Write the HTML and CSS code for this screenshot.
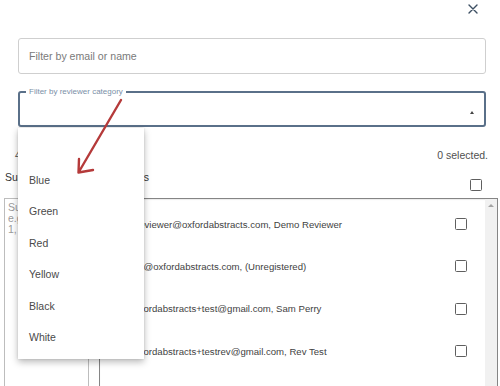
FILE: index.html
```html
<!DOCTYPE html>
<html lang="en">
<head>
<meta charset="UTF-8">
<meta name="viewport" content="width=device-width, initial-scale=1.0">
<title>Assign Reviewers</title>
<link rel="stylesheet" href="styles.css">
</head>
<body>
<div class="dialog">
    <div class="topbar">
        <button class="close" aria-label="Close">
            <svg width="10" height="10" viewBox="0 0 10 10"><path d="M1 1 L9 9 M9 1 L1 9" stroke="#3d4f63" stroke-width="1.4" stroke-linecap="round"/></svg>
        </button>
    </div>
    <input class="search" type="text" placeholder="Filter by email or name">
    <div class="select">
        <span class="select-label">Filter by reviewer category</span>
        <span class="caret"></span>
        <ul class="menu">
            <li class="menu-item"></li>
            <li class="menu-item">Blue</li>
            <li class="menu-item">Green</li>
            <li class="menu-item">Red</li>
            <li class="menu-item">Yellow</li>
            <li class="menu-item">Black</li>
            <li class="menu-item">White</li>
        </ul>
    </div>
    <div class="meta">
        <span class="count">4 submissions</span>
        <span class="selected">0 selected.</span>
    </div>
    <div class="columns-head">
        <span class="col-left">Submissions</span>
        <span class="col-right">Reviewers</span>
        <span class="checkbox"></span>
    </div>
    <div class="lists">
        <div class="ids">Submission IDs<br>e.g.<br>1, 2, 3</div>
        <div class="reviewers">
            <ul class="rows">
                <li class="row"><span class="row-text">demoreviewer@oxfordabstracts.com, Demo Reviewer</span><span class="checkbox"></span></li>
                <li class="row"><span class="row-text">admin1@oxfordabstracts.com, (Unregistered)</span><span class="checkbox"></span></li>
                <li class="row"><span class="row-text">tom.oxfordabstracts+test@gmail.com, Sam Perry</span><span class="checkbox"></span></li>
                <li class="row"><span class="row-text">tom.oxfordabstracts+testrev@gmail.com, Rev Test</span><span class="checkbox"></span></li>
            </ul>
            <div class="scrollbar"><span class="scroll-up"></span></div>
        </div>
    </div>
    <!-- annotation arrow drawn over the screenshot -->
    <svg class="annotation" width="500" height="386" viewBox="0 0 500 386">
        <path d="M121 100 L78.5 172.5 M79 159 L78.5 172.5 L93 170" fill="none" stroke="#b53a3a" stroke-width="2.4" stroke-linecap="round" stroke-linejoin="round"/>
    </svg>
</div>
</body>
</html>
```

FILE: styles.css
```css
html, body {
    margin: 0;
    padding: 0;
    width: 100%;
    height: 100%;
    background: #fff;
    font-family: "Liberation Sans", Arial, sans-serif;
    color: #444;
    overflow: hidden;
}
.dialog {
    position: relative;
    height: 386px;
}
.topbar {
    display: flex;
    justify-content: flex-end;
    height: 18px;
    padding-right: 22px;
}
.close {
    display: flex;
    align-items: center;
    justify-content: center;
    width: 10px;
    height: 18px;
    padding: 0;
    border: none;
    background: none;
}
.search {
    display: block;
    box-sizing: border-box;
    width: 468px;
    height: 36px;
    margin: 20px 0 0 18px;
    padding: 0 10px;
    border: 1px solid #cfcfcf;
    border-radius: 3px;
    font-family: inherit;
    font-size: 10.6px;
    color: #444;
}
.search::placeholder {
    color: #7a7a7a;
}
.select {
    position: relative;
    box-sizing: border-box;
    width: 468px;
    height: 36px;
    margin: 17px 0 0 18px;
    border: 2px solid #5a7089;
    border-radius: 3px;
    display: flex;
    justify-content: flex-end;
    align-items: flex-end;
    padding: 0 10px 11px 0;
}
.select-label {
    position: absolute;
    top: -6px;
    left: 6px;
    padding: 0 3px;
    background: #fff;
    font-size: 8px;
    line-height: 10px;
    color: #7b8fa7;
}
.caret {
    width: 0;
    height: 0;
    border-left: 2.5px solid transparent;
    border-right: 2.5px solid transparent;
    border-bottom: 3px solid #444;
}
.menu {
    position: absolute;
    top: 35px;
    left: -2px;
    width: 126px;
    margin: 0;
    padding: 5px 0;
    list-style: none;
    background: #fff;
    box-shadow: 0 3px 7px rgba(0, 0, 0, 0.28), 0 0 2px rgba(0, 0, 0, 0.12);
    z-index: 5;
}
.menu-item {
    height: 31.5px;
    line-height: 31.5px;
    padding-left: 11px;
    font-size: 10.5px;
    color: #4a4a4a;
}
.meta {
    display: flex;
    justify-content: space-between;
    margin-top: 21px;
    padding: 0 12px 0 15px;
    font-size: 10.5px;
    line-height: 14px;
    color: #505050;
}
.columns-head {
    display: flex;
    align-items: flex-start;
    height: 23px;
    margin-top: 7px;
    padding: 0 18px 0 5px;
    font-size: 10.5px;
    line-height: 16px;
    color: #333;
}
.col-left {
    width: 95px;
    overflow: hidden;
    white-space: nowrap;
}
.col-right {
    flex: 1;
}
.columns-head .checkbox {
    margin-top: 10px;
}
.checkbox {
    display: block;
    box-sizing: border-box;
    width: 12px;
    height: 12px;
    border: 1px solid #5f5f5f;
    border-radius: 1.5px;
    background: #fff;
    flex-shrink: 0;
}
.lists {
    display: flex;
    gap: 10px;
    margin-top: 6px;
    padding: 0 2px 0 4px;
    height: 200px;
}
.ids {
    box-sizing: border-box;
    width: 85px;
    padding: 3px 3px;
    border: 1px solid #bdbdbd;
    font-size: 10.5px;
    line-height: 11px;
    color: #9a9a9a;
    white-space: nowrap;
    overflow: hidden;
}
.reviewers {
    flex: 1;
    display: flex;
    border: 1px solid #858585;
    box-shadow: inset 0 1px 1px rgba(0, 0, 0, 0.08);
}
.rows {
    flex: 1;
    margin: 0;
    padding: 4px 18px 0 12px;
    list-style: none;
}
.row {
    display: flex;
    align-items: center;
    justify-content: space-between;
    height: 42.3px;
}
.row-text {
    font-size: 9.6px;
    color: #3f3f3f;
    white-space: nowrap;
}
.scrollbar {
    width: 12px;
    background: #f1f1f1;
    display: flex;
    justify-content: center;
    padding-top: 5px;
}
.scroll-up {
    width: 0;
    height: 0;
    border-left: 3px solid transparent;
    border-right: 3px solid transparent;
    border-bottom: 3px solid #a3a3a3;
}
.annotation {
    position: absolute;
    top: 0;
    left: 0;
    pointer-events: none;
    z-index: 10;
}
```
